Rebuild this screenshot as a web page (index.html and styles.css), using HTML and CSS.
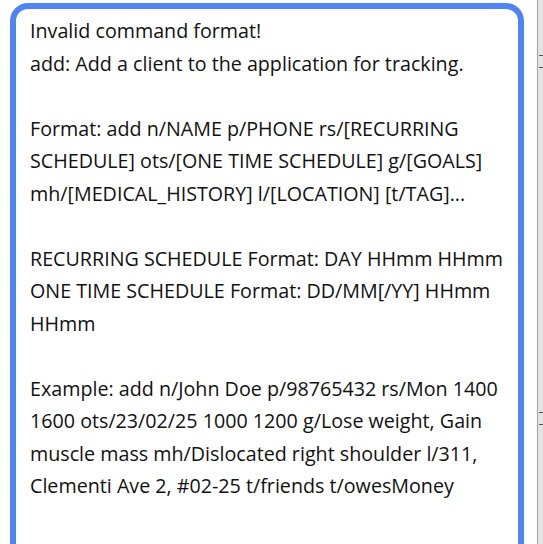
FILE: index.html
```html
<!DOCTYPE html>
<html>
<head>
<meta charset="utf-8">
<link rel="stylesheet" href="styles.css">
</head>
<body>
<div class="layout">
  <div class="main">
    <div class="result-box">
      <div class="line">Invalid command format!</div>
      <div class="line">add: Add a client to the application for tracking.</div>
      <div class="line blank"></div>
      <div class="line">Format: add n/NAME p/PHONE rs/[RECURRING</div>
      <div class="line">SCHEDULE] ots/[ONE TIME SCHEDULE] g/[GOALS]</div>
      <div class="line">mh/[MEDICAL_HISTORY] l/[LOCATION] [t/TAG]...</div>
      <div class="line blank"></div>
      <div class="line">RECURRING SCHEDULE Format: DAY HHmm HHmm</div>
      <div class="line">ONE TIME SCHEDULE Format: DD/MM[/YY] HHmm</div>
      <div class="line">HHmm</div>
      <div class="line blank"></div>
      <div class="line">Example: add n/John Doe p/98765432 rs/Mon 1400</div>
      <div class="line">1600 ots/23/02/25 1000 1200 g/Lose weight, Gain</div>
      <div class="line">muscle mass mh/Dislocated right shoulder l/311,</div>
      <div class="line">Clementi Ave 2, #02-25 t/friends t/owesMoney</div>
    </div>
  </div>
  <div class="divider">
    <span class="grip grip-top"></span>
    <span class="grip grip-bottom"></span>
  </div>
</div>
</body>
</html>
```
FILE: styles.css
```css
html, body {
  margin: 0;
  padding: 0;
  background: #ffffff;
  height: 544px;
  overflow: hidden;
}
.layout {
  display: flex;
  height: 544px;
}
.main {
  flex: 1;
  padding: 3px 13px 0 10px;
}
.result-box {
  box-sizing: border-box;
  width: 514px;
  height: 541px;
  border: 6px solid #4f84f4;
  border-bottom: none;
  border-radius: 18px 18px 0 0;
  padding: 6px 0 0 14px;
  font-family: "Open Sans", "Noto Sans", sans-serif;
  font-size: 19.7px;
  color: #111111;
  overflow: hidden;
}
.line {
  height: 32.5px;
  line-height: 32.5px;
  white-space: nowrap;
}
.divider {
  position: relative;
  width: 5px;
  border-left: 1px solid #9a9ade;
  background: #e4e4e4;
}
.grip {
  position: absolute;
  left: 1px;
  width: 5px;
  height: 1px;
  background: #555555;
}
.grip-top { top: 55px; box-shadow: 0 12px 0 #555555; }
.grip-bottom { top: 412px; box-shadow: 0 12px 0 #555555; }
```
